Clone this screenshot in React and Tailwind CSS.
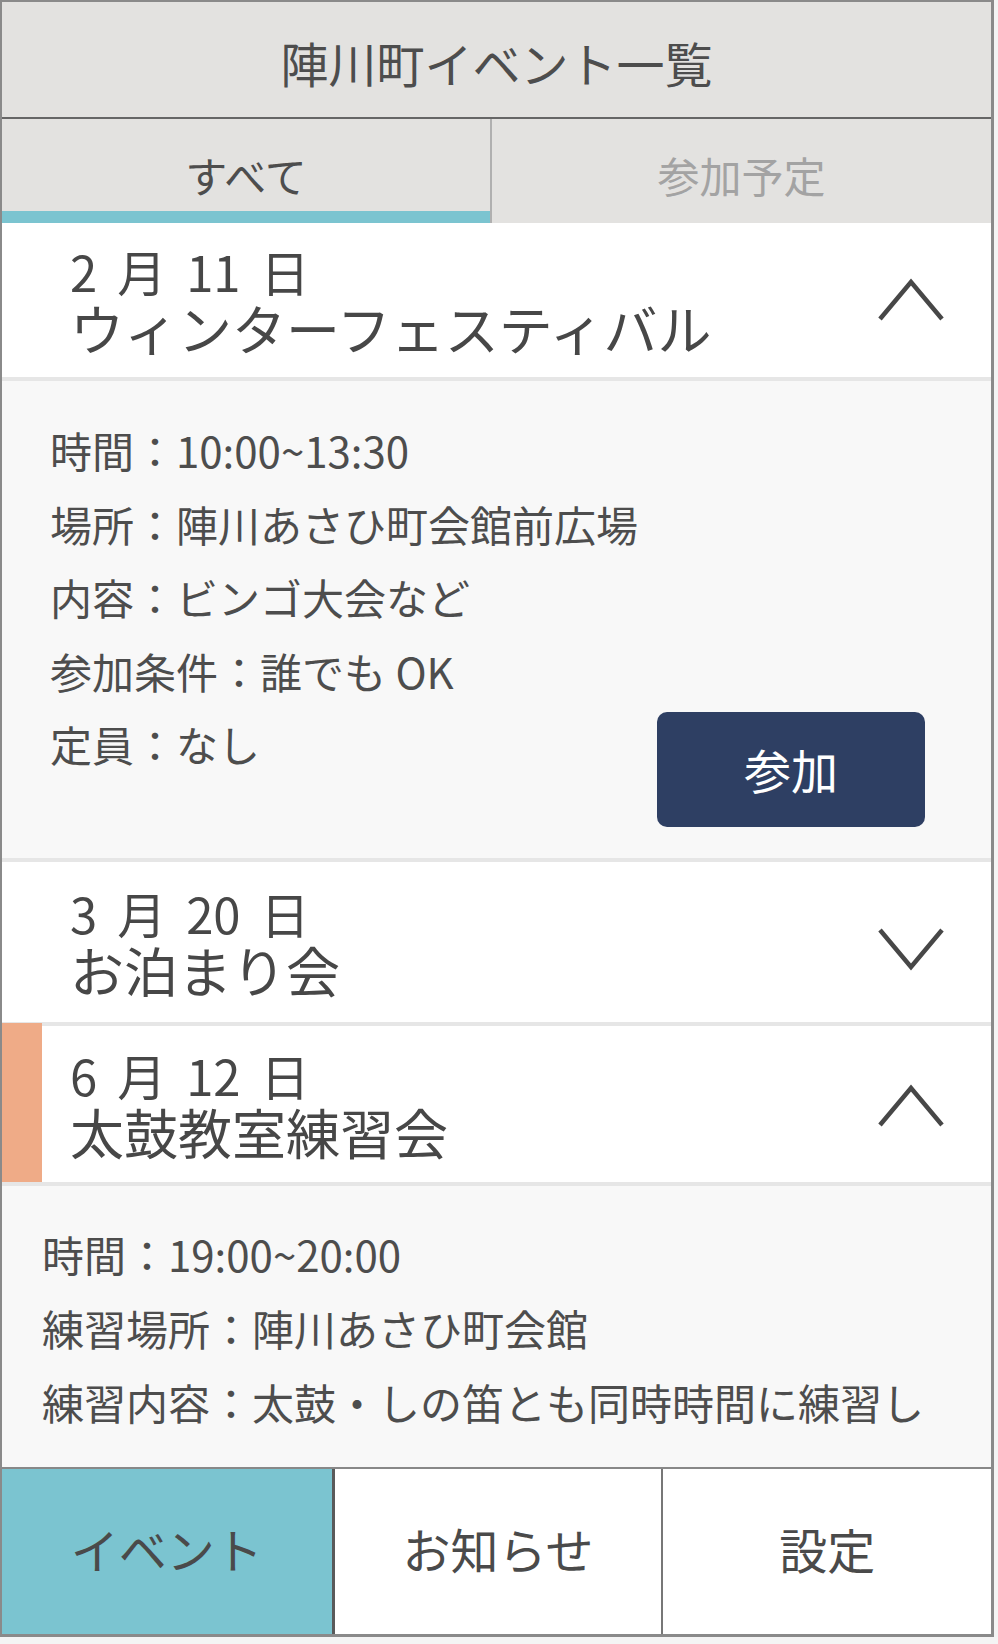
import React from "react";

const font = { fontFamily: '"Noto Sans CJK JP", "Noto Sans", sans-serif' };

const Chevron = ({ up }) => (
  <svg width="68" height="44" viewBox="0 0 68 44" className="shrink-0">
    <polyline
      points={up ? "3,41 34,4 65,41" : "3,3 34,40 65,3"}
      fill="none"
      stroke="#474747"
      strokeWidth="4.5"
      strokeLinejoin="miter"
    />
  </svg>
);

const EventHeader = ({ date, title, up, height, marker, chevronShift = "" }) => (
  <div className={`flex bg-white ${height}`}>
    {marker ? <div className="w-[40px] -mt-[3px] bg-[#efab87] shrink-0" /> : null}
    <div
      className={`flex flex-1 items-center justify-between ${
        marker ? "pl-[28px]" : "pl-[68px]"
      } pr-[46px]`}
    >
      <div className="flex flex-col text-[#474747]">
        <div className="text-[49px] leading-[56px] [word-spacing:9px]">{date}</div>
        <div className="text-[54px] leading-[58px]">{title}</div>
      </div>
      <div className={chevronShift}>
        <Chevron up={up} />
      </div>
    </div>
  </div>
);

const Divider = () => <div className="h-[4px] bg-[#e6e6e6] shrink-0" />;

export default function App() {
  return (
    <div className="w-[998px] h-[1644px] bg-[#f4f4f4]" style={font}>
      <div className="w-[994px] h-[1637px] border-t-2 border-l-2 border-r-[3px] border-b-[3px] border-[#8a8a8a] bg-white flex flex-col overflow-hidden">
        {/* Header */}
        <div className="h-[117px] shrink-0 bg-[#e3e2e0] border-b-2 border-[#666] flex items-center justify-center pt-[4px]">
          <span className="text-[48px] text-[#4d4d4d]">陣川町イベント一覧</span>
        </div>

        {/* Tabs */}
        <div className="h-[104px] shrink-0 flex bg-[#e3e2e0]">
          <div className="w-[488px] flex flex-col">
            <div className="h-[92px] flex items-center justify-center pt-[18px] text-[42px] text-[#4d4d4d]">
              すべて
            </div>
            <div className="h-[12px] bg-[#7bc4d0]" />
          </div>
          <div className="w-[2px] bg-[#b0b0b0]" />
          <div className="flex-1 flex flex-col">
            <div className="h-[92px] flex items-center justify-center pt-[18px] text-[42px] text-[#a3a3a3]">
              参加予定
            </div>
          </div>
        </div>

        {/* Event list */}
        <div className="flex-1 flex flex-col overflow-hidden">
          <EventHeader date="2 月 11 日" title="ウィンターフェスティバル" up height="h-[154px]" />
          <Divider />
          <div className="h-[477px] shrink-0 bg-[#f8f8f8] flex justify-between pl-[48px] pr-[66px] pt-[32px] text-[42px] text-[#4d4d4d]">
            <div className="flex flex-col leading-[73.5px]">
              <div>時間：10:00~13:30</div>
              <div>場所：陣川あさひ町会館前広場</div>
              <div>内容：ビンゴ大会など</div>
              <div>参加条件：誰でも OK</div>
              <div>定員：なし</div>
            </div>
            <button className="mt-[299px] self-start w-[268px] h-[115px] rounded-[10px] bg-[#2e3f63] text-white text-[47px] flex items-center justify-center">
              参加
            </button>
          </div>
          <Divider />
          <EventHeader date="3 月 20 日" title="お泊まり会" height="h-[160px]" chevronShift="mt-[14px]" />
          <Divider />
          <EventHeader date="6 月 12 日" title="太鼓教室練習会" up marker height="h-[156px]" chevronShift="mt-[4px]" />
          <Divider />
          <div className="flex-1 bg-[#f8f8f8] pl-[40px] pt-[31px] text-[42px] text-[#4d4d4d] leading-[74px] whitespace-nowrap overflow-hidden">
            <div>時間：19:00~20:00</div>
            <div>練習場所：陣川あさひ町会館</div>
            <div>練習内容：太鼓・しの笛とも同時時間に練習し</div>
          </div>
        </div>

        {/* Bottom nav */}
        <div className="h-[167px] shrink-0 border-t-2 border-[#888] grid grid-cols-3 text-[48px] text-[#4a4a4a]">
          <div className="bg-[#7bc4d0] flex items-center justify-center pb-[8px]">イベント</div>
          <div className="bg-white border-l-[3px] border-[#5a5a5a] flex items-center justify-center pb-[8px]">
            お知らせ
          </div>
          <div className="bg-white border-l-2 border-[#777] flex items-center justify-center pb-[8px]">
            設定
          </div>
        </div>
      </div>
    </div>
  );
}
